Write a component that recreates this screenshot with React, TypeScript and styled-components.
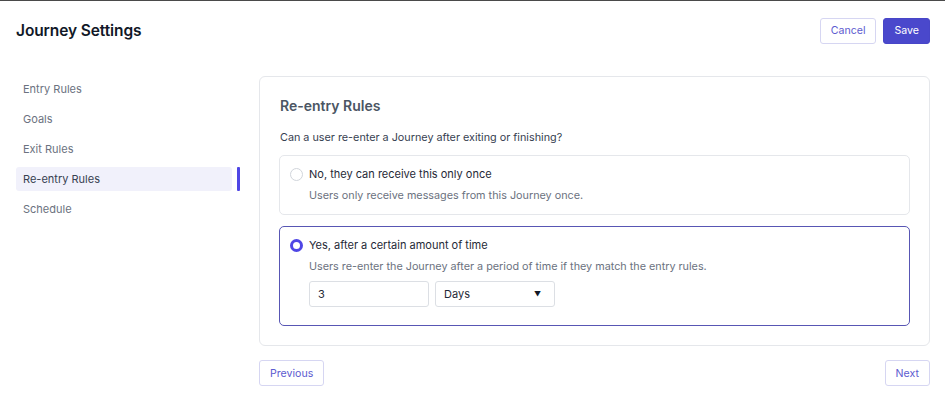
import React, { useState } from "react";
import styled, { createGlobalStyle } from "styled-components";

const GlobalStyle = createGlobalStyle`
  html, body {
    margin: 0;
    padding: 0;
    background: #ffffff;
  }
  body {
    font-family: Inter, "Noto Sans", "Liberation Sans", sans-serif;
    color: #1f2937;
    -webkit-font-smoothing: antialiased;
  }
  * {
    box-sizing: border-box;
  }
`;

const Page = styled.div`
  width: 945px;
  min-height: 400px;
  border-top: 1px solid #4a4a4a;
  padding: 0 15px 0 16px;
`;

const Header = styled.header`
  display: flex;
  align-items: center;
  justify-content: space-between;
  height: 59px;
`;

const Title = styled.h1`
  margin: 0;
  font-size: 15.5px;
  font-weight: 600;
  color: #111827;
  letter-spacing: -0.1px;
`;

const Actions = styled.div`
  display: flex;
  gap: 7px;
`;

const Button = styled.button<{ $primary?: boolean }>`
  height: 26px;
  padding: 0 10px;
  border-radius: 3px;
  font-family: inherit;
  font-size: 10.6px;
  font-weight: 400;
  cursor: pointer;
  border: 1px solid ${({ $primary }) => ($primary ? "#4846c8" : "#d6d6f2")};
  background: ${({ $primary }) => ($primary ? "#4a48cc" : "#ffffff")};
  color: ${({ $primary }) => ($primary ? "#ffffff" : "#5d5bd0")};
`;

const Body = styled.div`
  display: flex;
  gap: 19px;
  padding-top: 16px;
`;

const Sidebar = styled.nav`
  width: 224px;
  flex-shrink: 0;
  display: flex;
  flex-direction: column;
  gap: 6px;
  padding-top: 1px;
`;

const NavItem = styled.div<{ $active?: boolean }>`
  position: relative;
  width: 216px;
  height: 24px;
  display: flex;
  align-items: center;
  padding-left: 7px;
  border-radius: 3px;
  font-size: 11px;
  color: ${({ $active }) => ($active ? "#374151" : "#6b7280")};
  background: ${({ $active }) => ($active ? "#f1f1fb" : "transparent")};
  cursor: pointer;

  &::after {
    content: "";
    display: ${({ $active }) => ($active ? "block" : "none")};
    position: absolute;
    top: 0;
    right: -8px;
    width: 3px;
    height: 24px;
    border-radius: 1px;
    background: #4f46e5;
  }
`;

const Main = styled.main`
  flex: 1;
  display: flex;
  flex-direction: column;
  gap: 14px;
`;

const Card = styled.section`
  border: 1px solid #e5e7eb;
  border-radius: 6px;
  padding: 19px 19px 19px 19px;
  display: flex;
  flex-direction: column;
`;

const CardTitle = styled.h2`
  margin: 0 0 0 1px;
  font-size: 14px;
  line-height: 20px;
  font-weight: 600;
  color: #4b5563;
`;

const Question = styled.p`
  margin: 14px 0 9px 1px;
  font-size: 10.8px;
  line-height: 16px;
  color: #374151;
`;

const Options = styled.div`
  display: flex;
  flex-direction: column;
  gap: 11px;
`;

const Option = styled.label<{ $selected?: boolean }>`
  display: flex;
  flex-direction: column;
  padding: 10px 10px 10px 10px;
  border-radius: 5px;
  border: 1px solid ${({ $selected }) => ($selected ? "#5856b4" : "#e5e7eb")};
  cursor: pointer;
`;

const OptionHead = styled.div`
  display: flex;
  align-items: center;
  gap: 6px;
  height: 16px;
`;

const Radio = styled.span<{ $checked?: boolean }>`
  width: 13px;
  height: 13px;
  border-radius: 50%;
  flex-shrink: 0;
  border: ${({ $checked }) => ($checked ? "3.5px solid #4f46e5" : "1px solid #d1d5db")};
  background: #ffffff;
`;

const OptionLabel = styled.span`
  font-size: 11px;
  color: #1f2937;
`;

const OptionDesc = styled.div`
  margin-top: 6px;
  padding-left: 19px;
  font-size: 10.8px;
  line-height: 16px;
  color: #6b7280;
`;

const Fields = styled.div`
  display: flex;
  gap: 6px;
  margin: 6px 0 8px 19px;
`;

const Field = styled.div`
  width: 120px;
  height: 26px;
  border: 1px solid #dcdfe4;
  border-radius: 3px;
  display: flex;
  align-items: center;
  justify-content: space-between;
  padding: 0 13px 0 8px;
  font-size: 11px;
  color: #1f2937;
`;

const Caret = styled.span`
  font-size: 7px;
  color: #111827;
`;

const Footer = styled.div`
  display: flex;
  justify-content: space-between;
`;

const navItems = ["Entry Rules", "Goals", "Exit Rules", "Re-entry Rules", "Schedule"];

export default function App() {
  const [choice, setChoice] = useState<"once" | "time">("time");

  return (
    <Page>
      <GlobalStyle />
      <Header>
        <Title>Journey Settings</Title>
        <Actions>
          <Button>Cancel</Button>
          <Button $primary>Save</Button>
        </Actions>
      </Header>
      <Body>
        <Sidebar>
          {navItems.map((item) => (
            <NavItem key={item} $active={item === "Re-entry Rules"}>
              {item}
            </NavItem>
          ))}
        </Sidebar>
        <Main>
          <Card>
            <CardTitle>Re-entry Rules</CardTitle>
            <Question>Can a user re-enter a Journey after exiting or finishing?</Question>
            <Options>
              <Option $selected={choice === "once"} onClick={() => setChoice("once")}>
                <OptionHead>
                  <Radio $checked={choice === "once"} />
                  <OptionLabel>No, they can receive this only once</OptionLabel>
                </OptionHead>
                <OptionDesc>Users only receive messages from this Journey once.</OptionDesc>
              </Option>
              <Option $selected={choice === "time"} onClick={() => setChoice("time")}>
                <OptionHead>
                  <Radio $checked={choice === "time"} />
                  <OptionLabel>Yes, after a certain amount of time</OptionLabel>
                </OptionHead>
                <OptionDesc>
                  Users re-enter the Journey after a period of time if they match the entry rules.
                </OptionDesc>
                <Fields>
                  <Field>3</Field>
                  <Field>
                    Days
                    <Caret>▼</Caret>
                  </Field>
                </Fields>
              </Option>
            </Options>
          </Card>
          <Footer>
            <Button>Previous</Button>
            <Button>Next</Button>
          </Footer>
        </Main>
      </Body>
    </Page>
  );
}
